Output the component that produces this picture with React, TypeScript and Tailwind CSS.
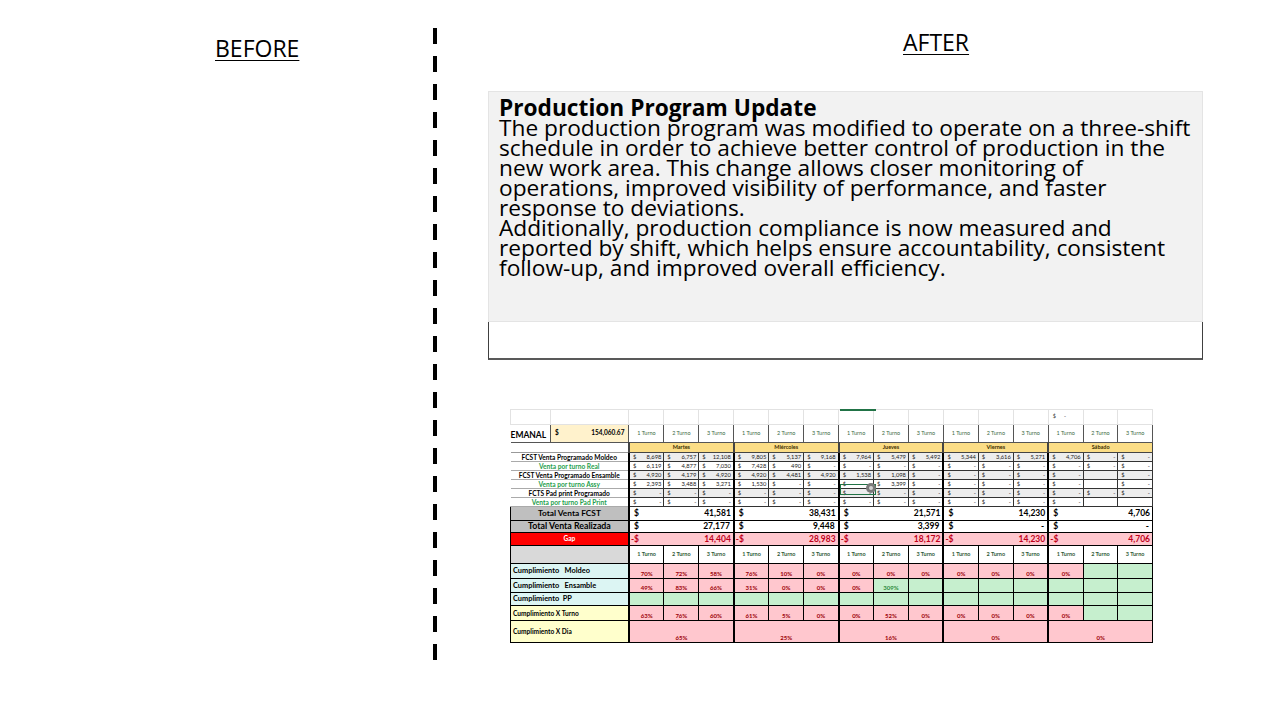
import React from 'react';

const days = ['Martes', 'Miércoles', 'Jueves', 'Viernes', 'Sábado'];

const upperRows: { label: string; green?: boolean; vals: (string | null)[] }[] = [
  { label: 'FCST Venta Programado Moldeo', vals: ['8,698', '6,757', '12,108', '9,805', '5,137', '9,168', '7,964', '5,479', '5,492', '5,344', '3,616', '5,271', '4,706', '-', '-'] },
  { label: 'Venta por turno Real', green: true, vals: ['6,119', '4,877', '7,030', '7,428', '490', '-', '-', '-', '-', '-', '-', '-', '-', '-', '-'] },
  { label: 'FCST Venta Programado Ensamble', vals: ['4,920', '4,179', '4,920', '4,920', '4,481', '4,920', '1,538', '1,098', '-', '-', '-', '-', '-', null, '-'] },
  { label: 'Venta por turno Assy', green: true, vals: ['2,393', '3,488', '3,271', '1,530', '-', '-', '-', '3,399', '-', '-', '-', '-', '-', null, '-'] },
  { label: 'FCTS Pad print Programado', vals: ['-', '-', '-', '-', '-', '-', '-', '-', '-', '-', '-', '-', '-', '-', '-'] },
  { label: 'Venta por turno Pad Print', green: true, vals: ['-', '-', '-', '-', '-', '-', '-', '-', '-', '-', '-', '-', '-', null, null] },
];

const G = 'g';
const pctRows: { label: string; bg: 'cyan' | 'yellow'; vals: string[] }[] = [
  { label: 'Cumplimiento   Moldeo', bg: 'cyan', vals: ['70%', '72%', '58%', '76%', '10%', '0%', '0%', '0%', '0%', '0%', '0%', '0%', '0%', G, G] },
  { label: 'Cumplimiento   Ensamble', bg: 'cyan', vals: ['49%', '83%', '66%', '31%', '0%', '0%', '0%', 'g309%', G, G, G, G, G, G, G] },
  { label: 'Cumplimiento  PP', bg: 'cyan', vals: [G, G, G, G, G, G, G, G, G, G, G, G, G, G, G] },
  { label: 'Cumplimiento X Turno', bg: 'yellow', vals: ['63%', '76%', '60%', '61%', '5%', '0%', '0%', '52%', '0%', '0%', '0%', '0%', '0%', G, G] },
];

const totalFcst = ['41,581', '38,431', '21,571', '14,230', '4,706'];
const totalReal = ['27,177', '9,448', '3,399', '-', '-'];
const gap = ['14,404', '28,983', '18,172', '14,230', '4,706'];
const perDay = ['65%', '25%', '16%', '0%', '0%'];

const turns = Array.from({ length: 15 }, (_, i) => i);

function Money({ v, className = '' }: { v: string; className?: string }) {
  return (
    <div className={`flex justify-between px-[2px] ${className}`}>
      <span>$</span>
      <span>{v}</span>
    </div>
  );
}

function Sheet() {
  return (
    <div className="relative w-[643px] h-[234px] overflow-hidden font-['Lato','Liberation_Sans',sans-serif] text-black">
      <table className="table-fixed border-collapse">
        <colgroup>
          <col className="w-[40px]" />
          <col className="w-[79px]" />
          {turns.map(i => <col key={i} className="w-[35.3px]" />)}
        </colgroup>
        <tbody>
          {/* blank top row */}
          <tr className="h-[15px]">
            <td className="border border-[#e2e2e2] p-0" />
            <td className="border border-[#e2e2e2] p-0" />
            {turns.map(i => (
              <td key={i} className="border border-[#e2e2e2] p-0 text-[5.5px] leading-none text-[#333]">
                {i === 12 && <div className="flex gap-[8px] pl-[4px]"><span>$</span><span>-</span></div>}
              </td>
            ))}
          </tr>
          {/* header turno row */}
          <tr className="h-[18px]">
            <td className="border-b border-[#555] p-0 align-bottom text-[8.5px] font-bold leading-none pb-[3px] whitespace-nowrap">EMANAL</td>
            <td className="border border-[#555] bg-[#fff2cc] p-0 text-[6.5px] font-bold leading-none">
              <Money v="154,060.67" className="pl-[4px] pr-[4px]" />
            </td>
            {turns.map(i => (
              <td key={i} className="border border-[#555] p-0 text-center text-[5.5px] leading-none text-[#3c6b44]">{i % 3 + 1} Turno</td>
            ))}
          </tr>
          {/* days row */}
          <tr className="h-[10px]">
            <td colSpan={2} className="border-b border-[#999] p-0" />
            {days.map(d => (
              <td key={d} colSpan={3} className="border border-[#444] border-l-2 bg-[#fbdd86] p-0 text-center text-[5.5px] font-bold leading-none text-[#3a2c00]">{d}</td>
            ))}
          </tr>
          {upperRows.map((r, ri) => (
            <tr key={r.label} className="h-[9px]">
              <td colSpan={2} className={`border-b border-[#aaa] p-0 text-center text-[6.6px] font-bold leading-none whitespace-nowrap ${r.green ? 'text-[#1e9e4c]' : 'text-black'}`}>{r.label}</td>
              {r.vals.map((v, i) => (
                <td
                  key={i}
                  className={`border border-[#333] p-0 text-[5.8px] leading-none text-[#222] ${i % 3 === 0 ? 'border-l-2 border-l-black' : ''} ${ri % 2 === 0 ? 'bg-[#ededed]' : 'bg-white'}`}
                >
                  {v !== null && <Money v={v} className="pl-[3px]" />}
                </td>
              ))}
            </tr>
          ))}
          {/* totals */}
          <tr className="h-[14px]">
            <td colSpan={2} className="border border-black bg-[#bfbfbf] p-0 text-center text-[8.3px] font-bold leading-none">Total Venta FCST</td>
            {totalFcst.map((v, i) => (
              <td key={i} colSpan={3} className="border border-black border-l-2 bg-white p-0 text-[8.5px] font-bold leading-none">
                <Money v={v} className="pl-[4px] pr-[2px]" />
              </td>
            ))}
          </tr>
          <tr className="h-[12px]">
            <td colSpan={2} className="border border-black bg-[#bfbfbf] p-0 text-center text-[8.8px] font-bold leading-none">Total Venta Realizada</td>
            {totalReal.map((v, i) => (
              <td key={i} colSpan={3} className="border border-black border-l-2 bg-white p-0 text-[8.5px] font-bold leading-none">
                <Money v={v} className="pl-[4px] pr-[3px]" />
              </td>
            ))}
          </tr>
          <tr className="h-[13px]">
            <td colSpan={2} className="border border-black bg-[#ff0000] p-0 text-center text-[6.5px] font-bold leading-none text-white">Gap</td>
            {gap.map((v, i) => (
              <td key={i} colSpan={3} className="border border-black border-l-2 bg-[#ffc7ce] p-0 text-[8.5px] font-bold leading-none text-[#c0001a]">
                <div className="flex justify-between pl-[1px] pr-[2px]">
                  <span>-$</span>
                  <span>{v}</span>
                </div>
              </td>
            ))}
          </tr>
          <tr className="h-[18px]">
            <td colSpan={2} className="border border-black bg-[#d9d9d9] p-0" />
            {turns.map(i => (
              <td key={i} className={`border border-black bg-white p-0 text-center text-[5.5px] font-bold leading-none text-[#2f5a36] ${i % 3 === 0 ? 'border-l-2' : ''}`}>{i % 3 + 1} Turno</td>
            ))}
          </tr>
          {pctRows.map((r, ri) => (
            <tr key={r.label} className={ri === 3 ? 'h-[15px]' : ri === 0 ? 'h-[15px]' : ri === 1 ? 'h-[14px]' : 'h-[13px]'}>
              <td
                colSpan={2}
                className={`border border-black p-0 pl-[2px] font-bold leading-none whitespace-pre ${r.bg === 'cyan' ? 'bg-[#dcf5f3] text-[7.4px]' : 'bg-[#ffffcc] text-[6.6px]'}`}
              >
                {r.label}
              </td>
              {r.vals.map((v, i) => {
                const green = v.startsWith('g');
                const txt = green ? v.slice(1) : v;
                return (
                  <td
                    key={i}
                    className={`border border-black p-0 align-bottom pb-[1px] text-center text-[6px] font-bold leading-none ${i % 3 === 0 ? 'border-l-2' : ''} ${green ? 'bg-[#c6efce] text-[#2e8b3d]' : 'bg-[#ffc7ce] text-[#9c0006]'}`}
                  >
                    {txt}
                  </td>
                );
              })}
            </tr>
          ))}
          <tr className="h-[22px]">
            <td colSpan={2} className="border border-black bg-[#ffffcc] p-0 pl-[2px] text-[6.6px] font-bold leading-none">Cumplimiento X Dia</td>
            {perDay.map((v, i) => (
              <td key={i} colSpan={3} className="border border-black border-l-2 bg-[#ffc7ce] p-0 pb-[1px] align-bottom text-center text-[6px] font-bold leading-none text-[#9c0006]">{v}</td>
            ))}
          </tr>
          <tr className="h-[4px]">
            <td colSpan={17} className="border-t border-[#ccc] p-0" />
          </tr>
        </tbody>
      </table>
      {/* selection marks over the sheet */}
      <div className="absolute left-[330px] top-0 w-[36px] h-[2px] bg-[#217346]" />
      <div className="absolute left-[330px] top-[75px] w-[36px] h-[11px] border border-[#217346]" />
      <div className="absolute left-[356px] top-[74px] w-[10px] h-[10px] rounded-full bg-[#7a7a7a] flex items-center justify-center">
        <div className="w-[4px] h-[4px] rounded-full bg-[#d0d0d0]" />
      </div>
    </div>
  );
}

export default function App() {
  return (
    <div className="w-[1280px] h-[720px] bg-white flex font-['Open_Sans','Noto_Sans',sans-serif] text-black">
      <div className="w-[433px] pt-[34px] pl-[215px]">
        <span className="text-[23px] leading-[28px] underline underline-offset-[3px] decoration-1">BEFORE</span>
      </div>
      <div className="w-[4px] h-[633px] mt-[28px] bg-[repeating-linear-gradient(to_bottom,#000_0_16px,transparent_16px_28px)]" />
      <div className="flex-1 flex flex-col">
        <div className="h-[91px] pt-[28px] pl-[466px]">
          <span className="text-[23px] leading-[28px] underline underline-offset-[3px] decoration-1">AFTER</span>
        </div>
        <div className="ml-[51px] w-[715px] h-[269px] border border-t-0 border-[#404040] border-b-2 border-b-[#595959]">
          <div className="-mx-px h-[231px] bg-[#f2f2f2] border border-[#e4e4e4] pl-[10px] pt-[6px] text-[22.7px] leading-[20px] whitespace-nowrap">
            <div className="font-bold">Production Program Update</div>
            <div>The production program was modified to operate on a three-shift</div>
            <div>schedule in order to achieve better control of production in the</div>
            <div>new work area. This change allows closer monitoring of</div>
            <div>operations, improved visibility of performance, and faster</div>
            <div>response to deviations.</div>
            <div>Additionally, production compliance is now measured and</div>
            <div>reported by shift, which helps ensure accountability, consistent</div>
            <div>follow-up, and improved overall efficiency.</div>
          </div>
        </div>
        <div className="ml-[73px] mt-[49px]">
          <Sheet />
        </div>
      </div>
    </div>
  );
}
